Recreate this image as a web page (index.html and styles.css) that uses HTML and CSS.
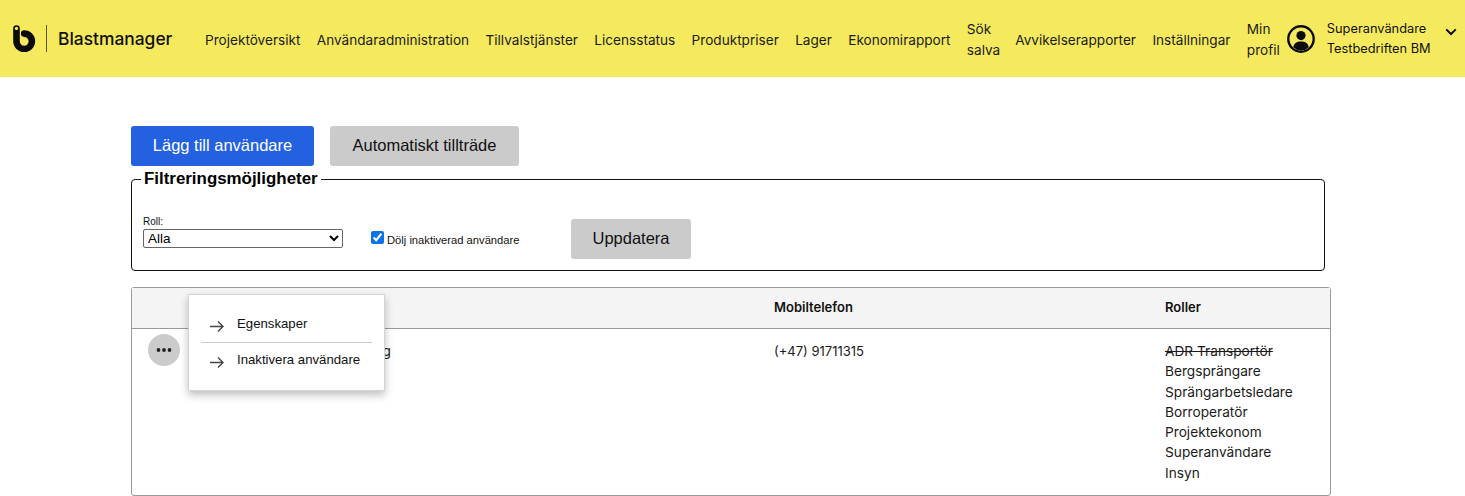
FILE: index.html
```html
<!DOCTYPE html>
<html lang="sv">
<head>
<meta charset="utf-8">
<title>Blastmanager</title>
<link rel="stylesheet" href="styles.css">
</head>
<body>
<header class="topbar">
  <a class="brand">
    <svg class="brand-logo" viewBox="0 0 23 27" width="23" height="27"><path d="M3.5 3.5V16.3a7.7 7.7 0 1 0 7.7-7.7" fill="none" stroke="#0b0b0b" stroke-width="6.6" stroke-linecap="round"/><circle cx="3.5" cy="3.4" r="1.7" fill="#f5ea5e"/></svg>
    <span class="brand-sep"></span>
    <span class="brand-name">Blastmanager</span>
  </a>
  <nav class="nav">
    <a>Projektöversikt</a>
    <a>Användaradministration</a>
    <a>Tillvalstjänster</a>
    <a>Licensstatus</a>
    <a>Produktpriser</a>
    <a>Lager</a>
    <a>Ekonomirapport</a>
    <a class="wrap">Sök salva</a>
    <a>Avvikelserapporter</a>
    <a>Inställningar</a>
    <a class="wrap">Min profil</a>
  </nav>
  <div class="user">
    <svg class="user-icon" viewBox="0 0 28 28" width="28" height="28"><circle cx="14" cy="14" r="12.7" fill="none" stroke="#0b0b0b" stroke-width="2.4"/><circle cx="14" cy="10.6" r="4.6" fill="#0b0b0b"/><path d="M6.2 22.2c.6-4 3.4-5.8 7.8-5.8s7.2 1.8 7.8 5.8A12 12 0 0 1 14 25.6a12 12 0 0 1-7.8-3.4z" fill="#0b0b0b"/></svg>
    <div class="user-text"><div>Superanvändare</div><div>Testbedriften BM</div></div>
    <svg class="user-chevron" viewBox="0 0 12 8" width="12" height="8"><path d="M1.2 1.4 6 6l4.8-4.6" fill="none" stroke="#0b0b0b" stroke-width="2"/></svg>
  </div>
</header>
<main class="content">
  <div class="actions">
    <button class="btn btn-primary btn-add">Lägg till användare</button>
    <button class="btn btn-muted btn-auto">Automatiskt tillträde</button>
  </div>
  <fieldset class="filters">
    <legend>Filtreringsmöjligheter</legend>
    <div class="filter-row">
      <label class="role-field"><span class="role-label">Roll:</span>
        <select class="role-select"><option>Alla</option></select>
      </label>
      <label class="hide-field"><input type="checkbox" class="hide-check" checked><span class="hide-text">Dölj inaktiverad användare</span></label>
      <button class="btn btn-muted btn-update">Uppdatera</button>
    </div>
  </fieldset>
  <div class="table-wrap">
    <div class="table-row table-head">
      <div class="col-actions"></div>
      <div class="col-name">Namn</div>
      <div class="col-phone">Mobiltelefon</div>
      <div class="col-roles">Roller</div>
    </div>
    <div class="table-row table-body">
      <div class="col-actions"><button class="dots"><svg viewBox="0 0 16 4" width="16" height="4"><circle cx="2.5" cy="2" r="1.9"/><circle cx="8" cy="2" r="1.9"/><circle cx="13.5" cy="2" r="1.9"/></svg></button></div>
      <div class="col-name"><div class="name-cell">Testning</div></div>
      <div class="col-phone phone-cell">(+47) 91711315</div>
      <div class="col-roles">
        <div class="struck">ADR Transportör</div>
        <div>Bergsprängare</div>
        <div>Sprängarbetsledare</div>
        <div>Borroperatör</div>
        <div>Projektekonom</div>
        <div>Superanvändare</div>
        <div>Insyn</div>
      </div>
    </div>
    <div class="menu">
      <a class="menu-item"><svg viewBox="0 0 14 12" width="14" height="12"><path d="M0 6.5h13M8 1.6l5 4.9-5 4.9" fill="none" stroke="#444" stroke-width="1.4"/></svg>Egenskaper</a>
      <div class="menu-sep"></div>
      <a class="menu-item"><svg viewBox="0 0 14 12" width="14" height="12"><path d="M0 6.5h13M8 1.6l5 4.9-5 4.9" fill="none" stroke="#444" stroke-width="1.4"/></svg>Inaktivera användare</a>
    </div>
  </div>
</main>
</body>
</html>
```
FILE: styles.css
```css
* { box-sizing: border-box; }
html, body { margin: 0; height: 496px; overflow: hidden; background: #fff; }
body { font-family: Inter, "Liberation Sans", sans-serif; font-size: 13px; color: #111; }

.topbar { display: flex; align-items: center; height: 77px; background: #f5ea5e; padding-left: 13px; }
.brand { display: flex; align-items: center; width: 184px; flex: none; }
.brand-logo { flex: none; margin-top: -1px; }
.brand-sep { width: 1px; height: 27px; background: #5c5620; margin: 0 11px 0 10px; }
.brand-name { font-size: 17.4px; font-weight: 500; color: #111; }
.nav { display: flex; align-items: center; gap: 16.4px; margin-left: 8px; margin-top: 3px; font-size: 13.6px; line-height: 21px; color: #1c1c1c; }
.nav a { white-space: nowrap; }
.nav a.wrap { white-space: normal; width: 32px; }
.user { display: flex; align-items: center; margin-left: 8px; }
.user-text { margin-left: 12px; font-size: 12.8px; line-height: 20px; width: 118px; }
.user-chevron { margin-top: -14px; }

.content { width: 1200px; margin-left: 131px; padding-top: 49px; }
.actions { display: flex; gap: 16px; }
.btn { height: 40px; border: 0; border-radius: 3px; font-family: "Liberation Sans", sans-serif; font-size: 16.5px; color: #111; padding: 0 0 2px; }
.btn-primary { background: #2361e0; color: #fff; }
.btn-muted { background: #cbcbcb; }
.btn-add { width: 183px; }
.btn-auto { width: 189px; }
.btn-update { width: 120px; flex: none; margin-top: 10px; }

.filters { width: 1194px; height: 101px; margin: 4px 0 0; padding: 0 11px; border: 1px solid #111; border-radius: 4px; }
.filters legend { padding: 0 3px; margin-left: -2px; font-family: "Liberation Sans", sans-serif; font-size: 16.9px; font-weight: 700; color: #000; line-height: 18px; }
.filter-row { display: flex; align-items: flex-start; padding-top: 21px; }
.role-field { display: block; width: 200px; margin-top: 7px; }
.role-label { display: block; font-family: "Liberation Sans", sans-serif; font-size: 10px; line-height: 11px; margin-bottom: 2px; }
.role-select { display: block; width: 200px; height: 19px; font-family: "Liberation Sans", sans-serif; font-size: 13.5px; padding: 0; background: #fff; color: #000; border: 1px solid #666; border-radius: 2px; }
.hide-field { display: flex; align-items: flex-start; margin-left: 28px; margin-top: 22px; font-family: "Liberation Sans", sans-serif; font-size: 11.2px; width: 200px; }
.hide-check { margin: 0 3px 0 0; width: 13px; height: 13px; accent-color: #0b72e7; }
.hide-text { margin-top: 3px; }

.table-wrap { position: relative; margin-top: 16px; height: 209px; border: 1px solid #9a9a9a; border-radius: 3px; }
.table-row { display: flex; }
.table-head { height: 41px; padding-bottom: 2px; align-items: center; background: #f4f4f4; border-bottom: 1px solid #9a9a9a; font-size: 13px; font-weight: 600; color: #111; }
.table-body { padding-top: 12px; font-size: 13.7px; line-height: 20.3px; color: #1a1a1a; }
.col-actions { width: 60px; flex: none; }
.col-name { width: 582px; flex: none; }
.name-cell { width: 199px; text-align: right; }
.col-phone { width: 391px; flex: none; }
.phone-cell { font-size: 13px; }
.col-roles { flex: 1; }
.struck { text-decoration: line-through; }
.dots { display: flex; align-items: center; justify-content: center; width: 32px; height: 32px; margin: -7px 0 0 16px; padding: 0; border: 0; border-radius: 50%; background: #cbcbcb; }
.dots svg { fill: #222; }

.menu { position: absolute; left: 56px; top: 6px; width: 197px; height: 97px; padding: 12px 12px 0; background: #fff; border: 1px solid #d4d4d4; box-shadow: 0 4px 8px rgba(0,0,0,.25); font-family: "Liberation Sans", sans-serif; font-size: 13.2px; color: #111; }
.menu-item { display: flex; align-items: center; gap: 13px; height: 33px; padding-left: 9px; }
.menu-item svg { flex: none; margin-top: 5px; }
.menu-sep { height: 1px; margin: 2px 0 0; background: #c9c9c9; }
```
